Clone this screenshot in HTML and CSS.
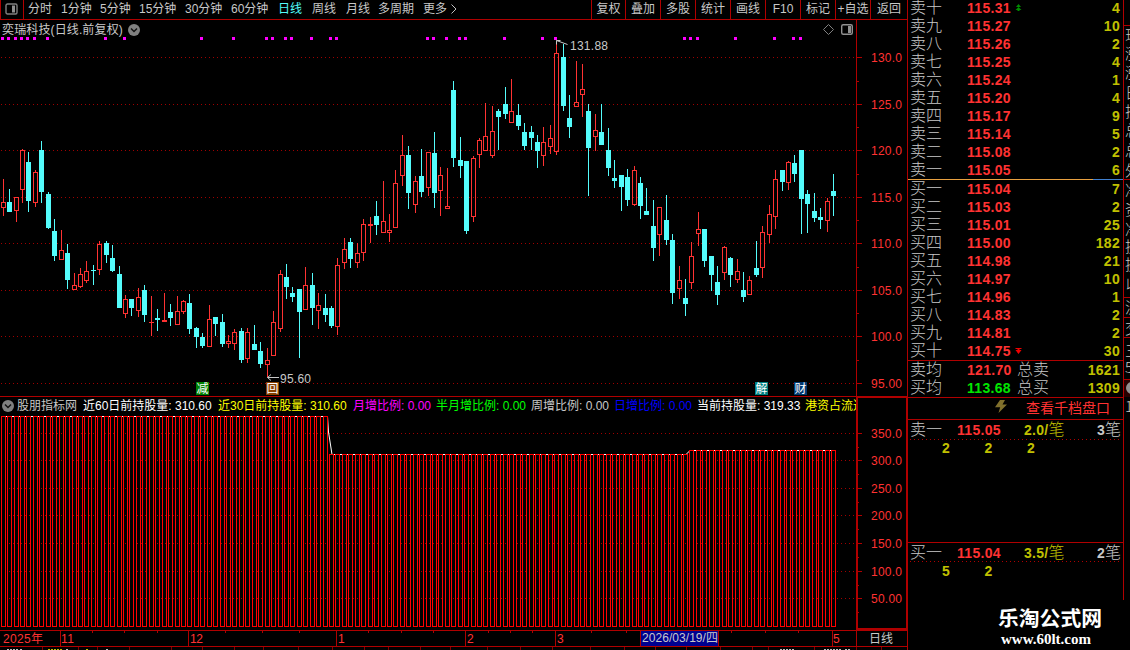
FILE: index.html
```html
<!DOCTYPE html>
<html lang="zh-CN">
<head>
<meta charset="utf-8">
<title>奕瑞科技 日线</title>
<link rel="stylesheet" href="styles.css">
</head>
<body>
<div class="app">
  <main class="main">
    <nav class="toolbar">
      <div class="panel-toggle"><svg width="13" height="12" viewBox="0 0 13 12"><rect x="1" y="1" width="11" height="10" rx="1.5" fill="none" stroke="#808080" stroke-width="1.4"/><rect x="7" y="2.5" width="3" height="7" fill="#909090"/></svg></div>
      <div class="periods">
        <span>分时</span><span>1分钟</span><span>5分钟</span><span>15分钟</span><span>30分钟</span><span>60分钟</span><span class="active">日线</span><span>周线</span><span>月线</span><span>多周期</span><span>更多</span>
        <svg class="chev" width="6" height="10" viewBox="0 0 6 10"><path d="M.5 .5 5 5 .5 9.5" fill="none" stroke="#c0c0c0"/></svg>
      </div>
      <div class="tools"><span>复权</span><span>叠加</span><span>多股</span><span>统计</span><span>画线</span><span>F10</span><span>标记</span><span>+自选</span><span>返回</span></div>
    </nav>
    <section class="price">
      <svg id="price" class="plot" width="907" height="376" viewBox="0 20 907 376"></svg>
      <header class="title">
        <span>奕瑞科技(日线.前复权)</span>
        <svg width="12" height="12" viewBox="0 0 12 12"><circle cx="6" cy="6" r="6" fill="#808080"/><path d="M3 4.5 6 7.5 9 4.5" fill="none" stroke="#111" stroke-width="1.5"/></svg>
      </header>
    </section>
    <section class="holding">
      <svg id="holding" class="plot" width="908" height="234" viewBox="0 396 908 234"></svg>
      <header class="legend">
        <svg width="12" height="12" viewBox="0 0 12 12"><circle cx="6" cy="6" r="6" fill="#808080"/><path d="M3 4.5 6 7.5 9 4.5" fill="none" stroke="#111" stroke-width="1.5"/></svg>
        <span class="gray name">股朋指标网</span><span class="white w135">近60日前持股量: 310.60</span><span class="yellow w135">近30日前持股量: 310.60</span><span class="magenta w83">月增比例: 0.00</span><span class="lime w95">半月增比例: 0.00</span><span class="gray w83">周增比例: 0.00</span><span class="blue w83">日增比例: 0.00</span><span class="white w108">当前持股量: 319.33</span><span class="yellow">港资占流通</span>
      </header>
    </section>
    <svg id="timeline" width="907" height="20" viewBox="0 630 907 20"></svg>
  </main>
  <aside class="book">
    <div class="levels sells" id="sells"></div>
    <div class="levels buys" id="buys"></div>
    <div class="totals">
      <div class="total"><span>卖均</span><b class="red">121.70</b><span>总卖</span><b class="vol">1621</b></div>
      <div class="total"><span>买均</span><b class="green">113.68</b><span>总买</span><b class="vol">1309</b></div>
    </div>
    <div class="depth"><svg width="12" height="13" viewBox="0 0 12 13"><path d="M5 0H10L7.5 4.5H12L3.5 13 5.2 7.3H0Z" fill="#80702c"/></svg><span>查看千档盘口</span></div>
    <div class="queue sell-queue">
      <div class="queue-head"><span>卖一</span><b class="red">115.05</b><span class="avg"><b>2.0/</b>笔</span><span class="cnt"><b>3</b>笔</span></div>
      <div class="lots"><b>2</b><b>2</b><b>2</b></div>
    </div>
    <div class="queue">
      <div class="queue-head"><span>买一</span><b class="red">115.04</b><span class="avg"><b>3.5/</b>笔</span><span class="cnt"><b>2</b>笔</span></div>
      <div class="lots"><b>5</b><b>2</b></div>
    </div>
    <div class="brand"><strong>乐淘公式网</strong><em>www.60lt.com</em></div>
  </aside>
  <svg id="edge" class="edge" width="7" height="650" viewBox="1123 0 7 650"></svg>
</div>
<script src="chart.js"></script>
</body>
</html>
```

FILE: styles.css
```css
* { box-sizing: border-box; }
body {
  margin: 0;
  background: #000;
  color: #c8c8c8;
  font: 12px/18px "Liberation Sans", "Noto Sans CJK SC", sans-serif;
  overflow: hidden;
}
svg { display: block; flex: none; }
.app { display: flex; width: 1130px; height: 650px; }
.main { width: 907px; flex: none; display: flex; flex-direction: column; }

.toolbar {
  height: 20px;
  flex: none;
  display: flex;
  border-bottom: 1px solid #b00000;
  white-space: nowrap;
  line-height: 19px;
}
.panel-toggle {
  width: 24px;
  border-left: 1px solid #b00000;
  border-right: 1px solid #b00000;
  padding: 3px 0 0 4px;
}
.periods {
  width: 567px;
  padding-left: 4px;
  display: grid;
  grid-template-columns: 33px 39px 39px 46px 46px 47px 34px 34px 32px 45px 28px 6px;
}
.active { color: #54fcfc; }
.chev { margin-top: 4px; }
.tools {
  display: grid;
  grid-template-columns: 34px 35px 35px 35px 35px 35px 35px 35px 37px;
}
.tools span { border-left: 1px solid #b00000; text-align: center; }

.price { height: 376px; flex: none; display: grid; }
.holding { height: 234px; flex: none; display: grid; }
.price > *, .holding > * { grid-area: 1 / 1; }
.title { display: flex; gap: 5px; height: 19px; padding-left: 2px; align-items: center; letter-spacing: .13px; }
.legend {
  display: flex;
  align-items: center;
  height: 19px;
  width: 856px;
  padding-left: 2px;
  overflow: hidden;
  white-space: nowrap;
}
.legend span { flex: none; }
.name { width: 66px; padding-left: 3px; }
.legend .name { margin-right: 3px; }
.w135 { width: 135px; }
.w83 { width: 83px; }
.w95 { width: 95px; }
.w108 { width: 108px; }
.gray { color: #c8c8c8; }
.white { color: #fff; }
.yellow { color: #ff0; }
.magenta { color: #f0f; }
.lime { color: #0f0; }
.blue { color: #00f; }

.plot text, #timeline text { font: 12px "Liberation Sans", "Noto Sans CJK SC", sans-serif; }
.plot { overflow: visible; }

.book {
  width: 216px;
  flex: none;
  border-left: 1px solid #b00000;
  font-size: 16px;
  font-weight: 300;
  white-space: nowrap;
  overflow: hidden;
}
.book b { font-size: 14px; font-weight: 700; letter-spacing: .3px; }
.red { color: #ff3232; }
.green { color: #00e600; }
.vol { color: #c0c000; }
.level { display: grid; grid-template-columns: 57px 48px 1fr 54px; height: 18px; padding: 0 3px 0 2px; align-items: center; }
.level .vol, .total .vol { text-align: right; }
.sells { display: flow-root; height: 180px; border-bottom: 1px solid; border-image: linear-gradient(90deg, #e8a040 184px, #4080d0 184px) 1; }
.sells .level:first-child { margin-top: -1px; }
.buys { height: 180px; }
.totals { height: 38px; border-top: 1px solid #b00000; border-bottom: 1px solid #b00000; }
.total { display: grid; grid-template-columns: 57px 50px 50px 1fr; height: 18px; padding: 0 3px 0 2px; align-items: center; }
.depth { height: 22px; display: flex; gap: 19px; padding: 2px 0 0 87px; border-bottom: 1px solid #b00000; color: #ff3232; font-size: 14px; font-weight: 400; line-height: 16px; }
.queue { height: 108px; border-top: 1px solid #b00000; }
.sell-queue { height: 122px; border-top: 0; }
.queue-head {
  display: grid;
  grid-template-columns: 47px 67px 46px 1fr;
  height: 19px;
  padding: 0 2px;
  align-items: center;
  background: repeating-linear-gradient(90deg, #b00000 0 1px, transparent 1px 4px) 2px 18px / 211px 1px no-repeat;
}
.sell-queue .queue-head { height: 20px; padding-bottom: 1px; background-position: 2px 19px; }
.sell-queue .lots { margin-top: -1px; }
.avg { color: #c0c000; }
.cnt { text-align: right; }
.lots { display: flex; padding-left: 34px; color: #c0c000; }
.lots b { width: 42.5px; }
.brand { width: 194px; color: #fff; display: flex; flex-direction: column; padding: 0 0 0 90px; margin-top: -42px; }
.brand strong { font-size: 20.8px; line-height: 22px; font-weight: 700; }
.brand em { font: bold 15px/18px "Liberation Serif", serif; padding-left: 3px; }
.edge { width: 7px; overflow: hidden; }
.edge text { font: 300 15px "Noto Sans CJK SC", sans-serif; }
```

FILE: chart.js
```js
// Candles: direction, high, body top, body bottom, low (in plot units).
const candles = `R179,202,208,216 C189,202,212,212 R197,197,211,222 R149,150,190,203 C152,162,201,212 R170,172,203,207 C141,150,192,203 C192,194,228,229 C219,231,256,261 R230,250,260,260
C244,253,280,289 R273,285,290,290 R268,274,287,288 R261,271,281,283 C265,270,271,285 R241,244,270,275 C241,243,255,263 C245,258,271,272 C266,274,308,308 R295,299,314,318
C299,299,308,316 R288,297,311,317 C285,290,315,322 R296,322,323,336 C309,318,320,331 R293,320,322,322 C304,312,318,326 R296,311,325,325 R300,301,312,314 C294,303,329,334
C327,328,337,348 C333,337,346,348 R305,319,347,347 C317,317,324,336 C314,322,344,347 R335,341,344,348 R329,332,344,350 C328,331,360,363 R328,332,359,363 C325,344,350,350
C342,351,364,368 R348,360,365,377 R311,322,356,356 R270,274,329,332 C264,277,287,299 C287,293,297,302 C289,289,312,358 R267,285,310,310 C273,285,308,325 R293,305,311,329
C294,308,315,322 C306,308,326,328 R258,265,327,335 R238,249,263,269 C238,242,259,268 R243,253,263,268 R219,224,253,261 R217,224,226,243 C201,216,225,235 R181,221,233,233
R214,230,233,242 R170,183,228,228 R135,155,176,186 C146,155,193,209 R176,181,205,213 C149,176,192,197 R152,152,188,196 C132,153,193,208 R167,175,191,216 R168,206,209,209
C81,90,158,167 C137,160,166,178 C161,161,231,234 R156,158,217,222 R138,140,155,168 R103,136,151,151 R106,131,156,158 C109,111,117,150 C87,104,114,119 R79,111,123,123
C104,115,126,130 C123,132,146,150 C126,132,138,150 C135,142,151,168 R127,142,156,166 R125,138,147,154 R43,53,152,155 C44,57,106,111 C95,118,127,138 R61,102,107,107
R64,89,95,117 C104,111,148,196 R114,130,137,151 C104,132,145,145 C128,150,168,176 C160,178,181,188 C175,175,187,211 C169,177,200,206 R166,170,205,206 C177,183,206,219
C188,211,215,215 C200,226,248,261 R207,207,235,256 C195,220,240,245 C234,240,293,304 R266,280,289,299 C279,298,304,316 R242,256,283,289 R212,229,234,246 C229,229,261,267
C256,256,275,291 C266,282,295,305 R246,247,273,280 C257,258,275,287 R259,271,280,283 C272,290,297,302 R276,280,295,295 C241,268,275,277 R226,232,268,278 R205,214,235,243
R170,179,217,229 C170,170,182,191 R161,162,183,190 C155,163,174,182 C150,150,199,234 C190,194,204,233 C193,211,218,222 C208,217,220,229 R198,201,221,232 C174,191,196,216`
  .split(/\s+/).map(s => [s[0], ...s.slice(1).split(',').map(Number)]);

const RED = '#ff3232', CYAN = '#54fcfc', LINE = '#b00000';
const rect = (x, y, w, h, c) => `<rect x="${x}" y="${y}" width="${w}" height="${h}" fill="${c}" shape-rendering="crispEdges"/>`;
const text = (x, y, s, c, w) => `<text x="${x}" y="${y}" fill="${c}"${w ? ` textLength="${w}"` : ''}>${s}</text>`;
const centre = i => Math.floor(3.25 + 6.4365 * i);
const dots = (x0, x1, y) => `<line x1="${x0}" x2="${x1}" y1="${y + .5}" y2="${y + .5}" stroke="#a00000" stroke-dasharray="1 3" shape-rendering="crispEdges"/>`;
const frame = (x, y, w, h, c) => rect(x, y, w, 1, c) + rect(x, y + h - 1, w, 1, c) + rect(x, y, 1, h, c) + rect(x + w - 1, y, 1, h, c);

// Price panel
let p = '';
const rows = [57, 104, 150, 197, 243, 290, 336, 383];
['130.0', '125.0', '120.0', '115.0', '110.0', '105.0', '100.0', '95.00'].forEach((s, i) => {
  p += dots(1, 856, rows[i]) + rect(857, rows[i], 5, 1, LINE) + text(871, rows[i] + 5, s, RED, 31);
  if (i < 7) p += rect(857, rows[i] + 24 - i % 2, 2, 1, LINE);
});
p += rect(856, 20, 1, 376, LINE);
candles.forEach(([k, hi, top, bot, lo], i) => {
  const x = centre(i), c = k === 'R' ? RED : CYAN;
  if (k === 'C') p += rect(x, hi, 1, lo - hi, c) + rect(x - 2, top, 5, bot - top, c);
  else p += rect(x, hi, 1, top - hi, c) + rect(x, bot, 1, lo - bot, c) + (bot - top < 3 ? rect(x - 2, top, 5, bot - top, c) : frame(x - 2, top, 5, bot - top, c));
});
[1, 7, 14, 20, 26, 33, 46, 104, 123, 200, 232, 265, 271, 284, 290, 310, 329, 335, 426, 432, 445, 458, 464, 503, 541, 554, 683, 689, 696, 734, 773, 792, 799]
  .forEach(x => { p += rect(x, 37, 3, 3, '#f0f'); });
p += `<path d="M567.5 44.5 556.5 40.5M556.5 44.5V40.5H560.5M267.5 377.5H279M271 374.5 267.5 377.5 271 380.5" fill="none" stroke="#c8c8c8"/>`;
p += text(570, 50, '131.88', '#c8c8c8', 38) + text(280, 383, '95.60', '#c8c8c8', 31);
[[196, '减', '#008000'], [266, '回', '#8a4000'], [755, '解', '#008080'], [794, '财', '#003870']].forEach(([x, s, c]) => {
  p += rect(x, 382, 13, 13, c) + text(x + .5, 393, s, '#fff');
});
p += `<path d="M828.5 24.5 833.5 29.5 828.5 34.5 823.5 29.5Z" fill="none" stroke="#808080"/><rect x="841.7" y="24.7" width="10.6" height="9.6" rx="1.5" fill="none" stroke="#909090" stroke-width="1.4"/>` + rect(848, 26, 3, 7, '#909090');
document.getElementById('price').innerHTML = p;

// Holding panel
let h = rect(0, 396, 908, 1, LINE);
const marks = [433, 460, 488, 515, 543, 571, 598];
marks.forEach((y, i) => {
  h += dots(1, 856, y) + rect(858, y, 4, 1, LINE) + text(871, y + 5, ['350.0', '300.0', '250.0', '200.0', '150.0', '100.0', '50.00'][i], RED, 31);
  h += rect(858, y + 14, 1, 1, LINE);
});
h += `<path d="M1 416.5H327.5L328.5 432 332 454.5H686L690 450.5H835" fill="none" stroke="#fff"/>`;
for (let i = 0; i < 130; i++) {
  const top = i < 51 ? 416 : i < 107 ? 454 : 450;
  h += frame(centre(i) - 2, top, 5, 627 - top, '#f00');
}
h += rect(856, 396, 2, 234, LINE) + rect(906, 396, 2, 234, LINE) + rect(856, 396, 52, 2, LINE) + rect(856, 628, 52, 2, LINE);
document.getElementById('holding').innerHTML = h;

// Time axis
let t = rect(0, 630, 907, 1, LINE) + rect(0, 646, 907, 1, LINE);
[60, 188, 336, 465, 555, 832, 856].forEach(x => { t += rect(x, 630, 1, 17, LINE); });
[92, 124, 157, 225, 262, 299, 368, 401, 433, 488, 510, 532, 591, 626, 731, 765, 798].forEach(x => { t += rect(x, 631, 1, 2, LINE); });
[42, 78, 97, 129, 171, 202, 234, 263, 298, 332, 364, 388, 420, 450, 487, 520, 552, 590, 624, 655, 686, 720, 752, 768, 814, 856, 881].forEach(x => { t += rect(x, 647, 1, 3, '#800000'); });
t += rect(640, 631, 79, 15, '#000090') + rect(640, 631, 1, 15, LINE) + rect(718, 631, 1, 15, LINE);
[[3, '2025年', 40], [61, '11', 13], [190, '12', 13], [338, '1'], [467, '2'], [557, '3'], [833, '5']].forEach(([x, s, w]) => { t += text(x, 643, s, RED, w); });
t += text(642, 642, '2026/03/19/四', '#c8c8c8', 76) + text(869, 643, '日线', '#c8c8c8');
[[7, 10, '#c0c0c0'], [20, 2, '#c0c0c0'], [48, 15, '#c0c000'], [66, 2, '#c0c0c0'], [86, 2, '#c0c000'], [106, 3, '#c0c0c0'], [780, 14, '#c0c0c0'], [824, 16, '#c0c0c0'], [845, 4, '#c0c0c0']].forEach(([x, w, c]) => {
  for (let k = 0; k < w; k += 3) t += rect(x + k, 649, 2, 1, c);
});
document.getElementById('timeline').innerHTML = t;

// Order book
const up = '<svg width="7" height="8" viewBox="0 0 7 8"><path d="M3.5 0 6 3H1ZM3.5 3 6.5 6H4.5V7H2.5V6H.5Z" fill="#008c00"/></svg>';
const down = '<svg width="7" height="8" viewBox="0 0 7 8"><path d="M.5 1H6.5V2H4.5V3H6.5L3.5 7 .5 3H2.5V2H.5Z" fill="#f00000"/></svg>';
const level = ([n, price, v, mark = '']) => `<div class="level"><span>${n}</span><b class="red">${price}</b><i>${mark}</i><b class="vol">${v}</b></div>`;
document.getElementById('sells').innerHTML = [['卖十', '115.31', 4, up], ['卖九', '115.27', 10], ['卖八', '115.26', 2], ['卖七', '115.25', 4], ['卖六', '115.24', 1], ['卖五', '115.20', 4], ['卖四', '115.17', 9], ['卖三', '115.14', 5], ['卖二', '115.08', 2], ['卖一', '115.05', 6]].map(level).join('');
document.getElementById('buys').innerHTML = [['买一', '115.04', 7], ['买二', '115.03', 2], ['买三', '115.01', 25], ['买四', '115.00', 182], ['买五', '114.98', 21], ['买六', '114.97', 10], ['买七', '114.96', 1], ['买八', '114.83', 2], ['买九', '114.81', 2], ['买十', '114.75', 30, down]].map(level).join('');

// Clipped neighbour column
let e = rect(1123, 0, 1, 600, LINE);
[25, 179, 297, 317, 337, 379].forEach(y => { e += rect(1123, y, 7, 1, LINE); });
e += rect(1124, 380, 6, 17, '#280000') + '<circle cx="1132" cy="388" r="6" fill="#909090"/>';
[['现', 35], ['涨', 53], ['涨', 72], ['日', 92], ['振', 111], ['总', 130], ['总', 150], ['外', 170], ['净', 190], ['资', 209], ['净', 229], ['换', 246], ['换', 264], ['以', 284], ['流', 307], ['交', 328], ['三', 350], ['5', 367], ['1', 406]].forEach(([s, y]) => {
  e += text(1125, y + 6, s, '#c8c8c8');
});
document.getElementById('edge').innerHTML = e;
```
